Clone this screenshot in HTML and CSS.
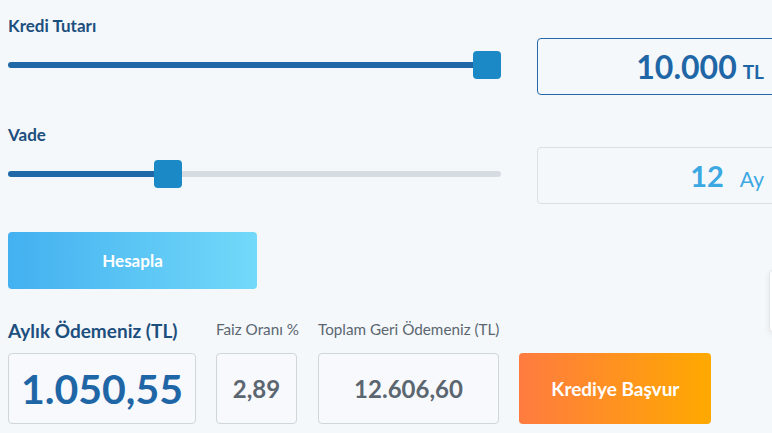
FILE: index.html
```html
<!DOCTYPE html>
<html lang="tr">
<head>
    <meta charset="UTF-8">
    <meta name="viewport" content="width=device-width, initial-scale=1.0">
    <title>Kredi Hesaplama</title>
    <link rel="stylesheet" href="styles.css">
</head>
<body>
    <div class="calc">
        <div class="field-row">
            <label class="field-label" for="amount">Kredi Tutarı</label>
            <input id="amount" class="slider" type="range" min="1000" max="10000" step="500" value="10000" style="--fill: 100%;">
            <div class="value-box value-box--active">
                <span class="value-num">10.000</span><span class="value-unit">TL</span>
            </div>
        </div>

        <div class="field-row">
            <label class="field-label" for="term">Vade</label>
            <input id="term" class="slider" type="range" min="1" max="36" step="1" value="12" style="--fill: 31.4%;">
            <div class="value-box value-box--term">
                <span class="value-num">12</span><span class="value-unit">Ay</span>
            </div>
        </div>

        <button class="btn-calc" type="button">Hesapla</button>

        <div class="results">
            <div class="result result--main">
                <span class="result-label">Aylık Ödemeniz (TL)</span>
                <div class="result-box">1.050,55</div>
            </div>
            <div class="result result--rate">
                <span class="result-label">Faiz Oranı %</span>
                <div class="result-box">2,89</div>
            </div>
            <div class="result result--total">
                <span class="result-label">Toplam Geri Ödemeniz (TL)</span>
                <div class="result-box">12.606,60</div>
            </div>
            <button class="btn-apply" type="button">Krediye Başvur</button>
        </div>
    </div>
    <div class="side-card"></div>
</body>
</html>
```

FILE: styles.css
```css
body {
    font-family: "Lato", "Noto Sans", Arial, sans-serif;
    margin: 0;
    padding: 0 8px;
    background-color: #f4f8fb;
    overflow: hidden;
    width: 900px;
}

.calc {
    padding-top: 14px;
}

.field-row {
    display: grid;
    grid-template-columns: 493px 250px;
    grid-template-rows: auto 57px;
    column-gap: 36px;
    margin-bottom: 28px;
}

.field-label {
    grid-column: 1;
    grid-row: 1;
    font-size: 17px;
    line-height: 20px;
    font-weight: 700;
    color: #1d4f7e;
    padding-top: 2px;
    margin-bottom: 2px;
}

.slider {
    grid-column: 1;
    grid-row: 2;
    align-self: center;
    -webkit-appearance: none;
    appearance: none;
    width: 100%;
    height: 28px;
    margin: 0 0 3px;
    background: transparent;
}

.slider::-webkit-slider-runnable-track {
    height: 6px;
    border-radius: 3px;
    background: linear-gradient(to right, #1f68a8 var(--fill), #d6dce1 var(--fill));
}

.slider::-webkit-slider-thumb {
    -webkit-appearance: none;
    width: 28px;
    height: 28px;
    margin-top: -11px;
    border: none;
    border-radius: 4px;
    background: #1a89c6;
}

.slider::-moz-range-track {
    height: 6px;
    border-radius: 3px;
    background: linear-gradient(to right, #1f68a8 var(--fill), #d6dce1 var(--fill));
}

.slider::-moz-range-thumb {
    width: 28px;
    height: 28px;
    border: none;
    border-radius: 4px;
    background: #1a89c6;
}

.value-box {
    grid-column: 2;
    grid-row: 2;
    display: flex;
    align-items: baseline;
    justify-content: flex-end;
    padding: 0 22px 0 0;
    box-sizing: border-box;
    border: 1px solid #dadfe3;
    border-radius: 4px;
    line-height: 55px;
}

.value-box--active {
    border: 1.5px solid #2468a7;
    color: #1f66a6;
}

.value-box--active .value-num {
    font-size: 32px;
    font-weight: 700;
}

.value-box--active .value-unit {
    font-size: 19px;
    font-weight: 700;
    margin-left: 6px;
}

.value-box--term {
    color: #3ba8e2;
}

.value-box--term .value-num {
    font-size: 29px;
    font-weight: 700;
}

.value-box--term .value-unit {
    font-size: 21px;
    margin-left: 16px;
}

.btn-calc {
    display: block;
    width: 249px;
    height: 57px;
    border: none;
    border-radius: 4px;
    background: linear-gradient(to right, #43b0f0, #72d9f9);
    color: #fff;
    font-family: inherit;
    font-size: 17px;
    font-weight: 700;
}

.results {
    display: flex;
    align-items: flex-end;
    gap: 20px;
    margin-top: 30px;
}

.result {
    display: flex;
    flex-direction: column;
}

.result-label {
    font-size: 15.25px;
    line-height: 20px;
    color: #5b6670;
    margin-bottom: 14px;
    white-space: nowrap;
}

.result--main .result-label {
    font-size: 19px;
    line-height: 24px;
    font-weight: 700;
    color: #1d4f7e;
    margin-bottom: 10px;
}

.result-box {
    height: 71px;
    box-sizing: border-box;
    border: 1px solid #cfd6dc;
    border-radius: 4px;
    background-color: #f7f9fc;
    display: flex;
    align-items: center;
    justify-content: center;
    font-size: 24px;
    font-weight: 700;
    color: #5b6670;
}

.result--main .result-box {
    width: 188px;
    font-size: 41px;
    color: #1f66a6;
}

.result--rate {
    width: 81px;
}

.result--total {
    margin-left: 1px;
}

.result--total .result-box {
    width: 181px;
}

.btn-apply {
    width: 192px;
    height: 71px;
    border: none;
    border-radius: 4px;
    background: linear-gradient(to right, #ff7b40, #ffa900);
    color: #fff;
    font-family: inherit;
    font-size: 19px;
    font-weight: 700;
}

.side-card {
    position: absolute;
    left: 769px;
    top: 270px;
    width: 60px;
    height: 60px;
    background: #fff;
    border: 1px solid #e3e7ea;
    border-radius: 4px;
    box-shadow: 0 2px 6px rgba(0, 0, 0, 0.08);
}
```
